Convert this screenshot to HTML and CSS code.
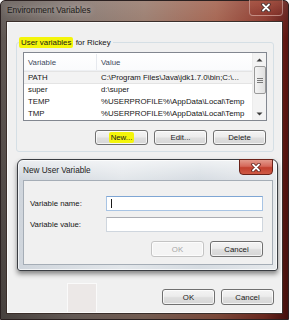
FILE: index.html
```html
<!DOCTYPE html>
<html>
<head>
<meta charset="utf-8">
<link rel="stylesheet" href="styles.css">
</head>
<body>
<div class="win">
  <div class="titlebar">
    <span class="title">Environment Variables</span>
    <div class="close">
      <svg width="10" height="9" viewBox="0 0 10 9"><path d="M2 1.5 L8 7.5 M8 1.5 L2 7.5" stroke="#3a2a2a" stroke-width="3.4" stroke-linecap="round"/><path d="M2 1.5 L8 7.5 M8 1.5 L2 7.5" stroke="#ffffff" stroke-width="1.8" stroke-linecap="round"/></svg>
    </div>
  </div>
  <div class="client">
    <div class="group">
      <div class="legend"><mark class="hl">User variables</mark> for Rickey</div>
      <div class="list">
        <div class="list-main">
          <div class="hdr"><span class="c1">Variable</span><span class="c2">Value</span></div>
          <div class="row sel"><span class="c1">PATH</span><span class="c2">C:\Program Files\Java\jdk1.7.0\bin;C:\...</span></div>
          <div class="row"><span class="c1">super</span><span class="c2">d:\super</span></div>
          <div class="row"><span class="c1">TEMP</span><span class="c2">%USERPROFILE%\AppData\Local\Temp</span></div>
          <div class="row"><span class="c1">TMP</span><span class="c2">%USERPROFILE%\AppData\Local\Temp</span></div>
        </div>
        <div class="sb">
          <svg class="arr" width="7" height="4" viewBox="0 0 7 4"><path d="M0.5 3.5 L3.5 0.5 L6.5 3.5Z" fill="#3c3c3c"/></svg>
          <div class="thumb"><span></span><span></span><span></span></div>
          <div class="sb-fill"></div>
          <svg class="arr" width="7" height="4" viewBox="0 0 7 4"><path d="M0.5 0.5 L3.5 3.5 L6.5 0.5Z" fill="#3c3c3c"/></svg>
        </div>
      </div>
      <div class="btns">
        <div class="btn"><mark class="hl">New...</mark></div>
        <div class="btn">Edit...</div>
        <div class="btn">Delete</div>
      </div>
    </div>
    <div class="footer">
      <div class="blank"></div>
      <div class="btn">OK</div>
      <div class="btn">Cancel</div>
    </div>

    <div class="modal">
      <div class="m-title">New User Variable</div>
      <div class="m-close">
        <svg width="10" height="9" viewBox="0 0 10 9"><path d="M2 1.5 L8 7.5 M8 1.5 L2 7.5" stroke="#5a1a14" stroke-width="3.4" stroke-linecap="round"/><path d="M2 1.5 L8 7.5 M8 1.5 L2 7.5" stroke="#ffffff" stroke-width="1.8" stroke-linecap="round"/></svg>
      </div>
      <div class="m-client">
        <div class="field">
          <span class="lbl">Variable name:</span>
          <div class="inp focus"><span class="caret"></span></div>
        </div>
        <div class="field">
          <span class="lbl">Variable value:</span>
          <div class="inp"></div>
        </div>
        <div class="m-btns">
          <div class="btn dis">OK</div>
          <div class="btn">Cancel</div>
        </div>
      </div>
    </div>
  </div>
</div>
</body>
</html>
```
FILE: styles.css
```css
* { box-sizing: border-box; }
html, body { margin: 0; padding: 0; }
body {
  width: 289px;
  height: 320px;
  overflow: hidden;
  font-family: "Liberation Sans", Arial, sans-serif;
  font-size: 7.8px;
  color: #151515;
  background: #ffffff;
}
.win {
  width: 289px;
  height: 320px;
  display: flex;
  flex-direction: column;
  padding: 0 5px 5px 5px;
  background:
    linear-gradient(180deg, rgba(255,255,255,0.12) 0px, rgba(255,255,255,0.05) 20px, rgba(0,0,0,0) 40px, rgba(0,0,0,0.25) 320px),
    linear-gradient(90deg, #5e5652 0%, #837670 25%, #987a6c 50%, #a2604c 75%, #8a3428 92%, #5a1410 100%);
  border: 1px solid #2a2020;
  border-radius: 5px 5px 0 0;
}
.titlebar {
  height: 21px;
  flex: none;
  display: flex;
  align-items: flex-start;
  justify-content: space-between;
  margin-top: -1px;
}
.title {
  margin: 5px 0 0 1px;
  line-height: 11px;
  font-size: 8.4px;
  color: #1c1a18;
  text-shadow: 0 0 6px rgba(255,255,255,0.6);
}
.close {
  width: 34px;
  height: 16px;
  border: 1px solid rgba(255,255,255,0.35);
  border-top: none;
  border-radius: 0 0 4px 4px;
  background: linear-gradient(180deg, rgba(180,90,70,0.5), rgba(140,50,40,0.4));
  display: flex;
  align-items: center;
  justify-content: center;
}
.client {
  position: relative;
  flex: 1;
  display: flex;
  flex-direction: column;
  background: #f0f0f0;
  border: 1px solid #3a2e2a;
  box-shadow: inset 0 0 0 1px #fbfbfb;
}
.group {
  margin: 20px 8px 0 9px;
  height: 110px;
  border: 1px solid #d5dfe5;
  border-radius: 3px;
  padding: 0 6px;
  display: flex;
  flex-direction: column;
}
.legend {
  align-self: flex-start;
  margin: -7px 0 0 -4px;
  height: 13px;
  line-height: 13px;
  font-size: 7.9px;
  background: #f0f0f0;
  padding-right: 2px;
}
.hl {
  background: #f4f50a;
  color: inherit;
  padding: 1px 2px;
  border-radius: 2px;
}
.list {
  margin-top: 3px;
  height: 69px;
  border: 1px solid #828790;
  background: #ffffff;
  display: flex;
}
.list-main {
  flex: 1;
  display: flex;
  flex-direction: column;
  overflow: hidden;
}
.hdr {
  height: 19px;
  display: flex;
  align-items: center;
  padding-top: 1px;
  color: #3d4a5c;
  background: linear-gradient(180deg, #ffffff, #fafbfc);
  border-bottom: 1px solid #eef0f3;
}
.hdr .c1 { border-right: 1px solid #e6e9ee; align-self: stretch; display: flex; align-items: center; }
.row {
  height: 12px;
  line-height: 12px;
  display: flex;
  white-space: nowrap;
}
.row.sel { background: #f3f3f3; border-top: 1px solid #e4e4e4; border-bottom: 1px solid #e4e4e4; height: 13px; line-height: 11px; }
.c1 { width: 73px; padding-left: 4px; flex: none; }
.c2 { padding-left: 4px; }
.sb {
  width: 14px;
  flex: none;
  background: #f3f3f3;
  border-left: 1px solid #ececec;
  display: flex;
  flex-direction: column;
  align-items: center;
  padding: 5px 0 4px;
}
.sb .arr { flex: none; }
.thumb {
  margin-top: 4px;
  width: 12px;
  height: 28px;
  border: 1px solid #9a9a9a;
  border-radius: 2px;
  background: linear-gradient(90deg, #f4f4f4, #e0e0e0);
  display: flex;
  flex-direction: column;
  align-items: center;
  justify-content: center;
  gap: 1px;
}
.thumb span { width: 6px; height: 1px; background: #7a7a7a; }
.sb-fill { flex: 1; }
.btns {
  margin-top: 9px;
  display: flex;
  justify-content: flex-end;
  gap: 6px;
  padding-right: 1px;
}
.btn {
  width: 53px;
  height: 15px;
  border: 1px solid #707070;
  border-radius: 3px;
  background: linear-gradient(180deg, #f4f4f4 0%, #ececec 45%, #dedede 55%, #d6d6d6 100%);
  box-shadow: inset 0 0 0 1px rgba(255,255,255,0.7);
  display: flex;
  align-items: center;
  justify-content: center;
  line-height: 11px;
  color: #1a1a1a;
}
.btn .hl { padding: 0 2px; }
.btn.dis {
  border-color: #c4c4c4;
  color: #a6a6a6;
  background: #f4f4f4;
}
.footer {
  margin-top: auto;
  height: 30px;
  display: flex;
  align-items: flex-start;
  padding: 0 8px 0 60px;
  gap: 6px;
}
.footer .blank {
  width: 30px;
  height: 30px;
  background: #ece8e7;
  border: 1px solid #fafafa;
  margin-right: auto;
}
.footer .btn { margin-top: 6px; height: 16px; }
.modal {
  position: absolute;
  left: 10px;
  top: 137px;
  width: 261px;
  height: 112px;
  border: 1px solid #3a3d42;
  border-radius: 6px 6px 3px 3px;
  background:
    linear-gradient(180deg, rgba(255,255,255,0.6), rgba(255,255,255,0) 20px),
    linear-gradient(90deg, #cfd5dc 0%, #e2e6ea 40%, #d6dce2 70%, #e6e9ec 100%);
  box-shadow: 0 3px 5px rgba(0,0,0,0.45), inset 0 0 0 1px rgba(255,255,255,0.7);
}
.m-title {
  position: absolute;
  left: 5px;
  top: 5px;
  line-height: 11px;
  font-size: 8.2px;
  color: #1c1c1c;
}
.m-close {
  position: absolute;
  left: 221px;
  top: -1px;
  width: 34px;
  height: 16px;
  border: 1px solid #6a2219;
  border-radius: 0 0 4px 4px;
  background: linear-gradient(180deg, #e39a8c 0%, #d5685a 45%, #c2402f 55%, #cf5a45 100%);
  display: flex;
  align-items: center;
  justify-content: center;
}
.m-client {
  position: absolute;
  left: 5px;
  top: 20px;
  width: 250px;
  height: 85px;
  border: 1px solid #a5adb6;
  background: #f0f0f0;
  padding: 15px 9px 0 6px;
  display: flex;
  flex-direction: column;
}
.field {
  display: flex;
  align-items: center;
  height: 15px;
  margin-bottom: 6px;
}
.lbl { width: 76px; flex: none; }
.inp {
  width: 159px;
  height: 15px;
  border: 1px solid #cfd6de;
  border-top-color: #abadb3;
  background: #ffffff;
  position: relative;
}
.inp.focus { border-color: #a8c4e4; border-top-color: #7fa6d4; }
.caret {
  position: absolute;
  left: 4px;
  top: 2px;
  width: 1px;
  height: 9px;
  background: #1a1a1a;
}
.m-btns {
  margin-top: 3px;
  display: flex;
  justify-content: flex-end;
  gap: 6px;
}
.m-btns .btn { height: 16px; }
```
